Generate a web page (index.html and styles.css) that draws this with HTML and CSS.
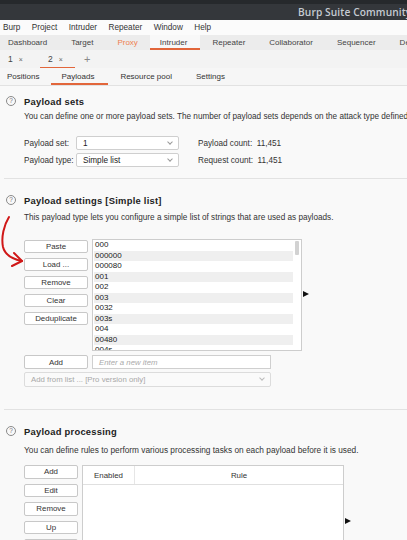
FILE: index.html
```html
<!DOCTYPE html>
<html>
<head>
<meta charset="utf-8">
<link rel="stylesheet" href="styles.css">
</head>
<body>
<div class="app">
  <div class="titlebar">
    <div class="titlestrip"></div>
    <div class="titlemain"><span class="apptitle">Burp Suite Community Edition</span></div>
  </div>
  <div class="menubar">
    <span class="menu m-burp">Burp</span>
    <span class="menu">Project</span>
    <span class="menu">Intruder</span>
    <span class="menu">Repeater</span>
    <span class="menu">Window</span>
    <span class="menu">Help</span>
  </div>
  <div class="tabs">
    <span class="tab first">Dashboard</span>
    <span class="tab">Target</span>
    <span class="tab proxy">Proxy</span>
    <span class="tab active">Intruder</span>
    <span class="tab">Repeater</span>
    <span class="tab">Collaborator</span>
    <span class="tab">Sequencer</span>
    <span class="tab">Decoder</span>
  </div>
  <div class="subtabs">
    <span class="stab">1<span class="x">×</span></span>
    <span class="stab active">2<span class="x">×</span></span>
    <span class="plus">+</span>
  </div>
  <div class="ptabs">
    <span class="ptab first">Positions</span>
    <span class="ptab active">Payloads</span>
    <span class="ptab">Resource pool</span>
    <span class="ptab">Settings</span>
  </div>

  <div class="content">
    <svg class="annot" width="30" height="60" viewBox="0 0 30 60">
      <path d="M9 2 C 4 10, 1 22, 3 32 C 5 40, 12 44, 22 46" fill="none" stroke="#d01818" stroke-width="2" stroke-linecap="round"/>
      <path d="M14 38 L22 46 L12 51" fill="none" stroke="#d01818" stroke-width="2" stroke-linecap="round" stroke-linejoin="round"/>
    </svg>

    <section class="sec sec1">
      <div class="head"><span class="help">?</span><span class="htitle">Payload sets</span></div>
      <p class="desc d1">You can define one or more payload sets. The number of payload sets depends on the attack type defined in the Positions tab.</p>
      <div class="form">
        <div class="frow">
          <span class="flabel">Payload set:</span>
          <div class="select"><span>1</span><span class="chev"></span></div>
          <span class="count">Payload count:&nbsp; 11,451</span>
        </div>
        <div class="frow">
          <span class="flabel">Payload type:</span>
          <div class="select"><span>Simple list</span><span class="chev"></span></div>
          <span class="count">Request count:&nbsp; 11,451</span>
        </div>
      </div>
    </section>
    <div class="sep s1"></div>

    <section class="sec sec2">
      <div class="head"><span class="help">?</span><span class="htitle">Payload settings [Simple list]</span></div>
      <p class="desc d2">This payload type lets you configure a simple list of strings that are used as payloads.</p>
      <div class="listarea">
        <div class="btns">
          <span class="btn">Paste</span>
          <span class="btn">Load ...</span>
          <span class="btn">Remove</span>
          <span class="btn">Clear</span>
          <span class="btn">Deduplicate</span>
        </div>
        <div class="listbox">
          <div class="rows">
            <div class="row">000</div>
            <div class="row">000000</div>
            <div class="row">000080</div>
            <div class="row">001</div>
            <div class="row">002</div>
            <div class="row">003</div>
            <div class="row">0032</div>
            <div class="row">003s</div>
            <div class="row">004</div>
            <div class="row">00480</div>
            <div class="row">004s</div>
          </div>
          <div class="scroll"><div class="thumb"></div></div>
        </div>
        <span class="tri t1"></span>
      </div>
      <div class="addrow">
        <span class="btn">Add</span>
        <div class="input">Enter a new item</div>
      </div>
      <div class="select wide disabled"><span>Add from list ... [Pro version only]</span><span class="chev"></span></div>
    </section>
    <div class="sep s2"></div>

    <section class="sec sec3">
      <div class="head"><span class="help">?</span><span class="htitle">Payload processing</span></div>
      <p class="desc d3">You can define rules to perform various processing tasks on each payload before it is used.</p>
      <div class="listarea la3">
        <div class="btns b3">
          <span class="btn">Add</span>
          <span class="btn">Edit</span>
          <span class="btn">Remove</span>
          <span class="btn">Up</span>
          <span class="btn">Down</span>
        </div>
        <div class="table">
          <div class="thead"><span class="th en">Enabled</span><span class="th rule">Rule</span></div>
        </div>
        <span class="tri t3"></span>
      </div>
    </section>
  </div>
</div>
</body>
</html>
```

FILE: styles.css
```css
* { box-sizing: border-box; }
html, body { margin: 0; padding: 0; }
body {
  width: 407px;
  height: 540px;
  overflow: hidden;
  background: #f9f9f9;
  font-family: "Liberation Sans", Arial, sans-serif;
  color: #2a2a2a;
  white-space: nowrap;
}
.app { width: 407px; height: 540px; overflow: hidden; position: relative; }

.titlebar { height: 20px; background: #34373b; }
.titlestrip { height: 4px; background: #26292c; }
.titlemain { height: 16px; padding-left: 298px; display: flex; align-items: center; overflow: hidden; }
.apptitle { font-family: "Open Sans", sans-serif; font-weight: 600; font-size: 10.2px; color: #c5cbd2; letter-spacing: 0.1px; }

.menubar { height: 15px; background: #fbfbfb; display: flex; align-items: center; font-size: 8.2px; color: #333; padding-left: 3px; }
.menu { margin-right: 11.5px; }

.tabs { height: 15px; background: #ececec; display: flex; align-items: stretch; font-size: 8px; color: #444; }
.tab { padding: 0 12px; display: flex; align-items: center; }
.tab.first { padding-left: 8px; }
.tab.proxy { color: #ef8150; }
.tab.active { background: #f8f8f8; border-bottom: 2px solid #e2663b; padding: 2px 13px 0 10px; }

.subtabs { height: 18px; background: #f3f3f3; display: flex; align-items: stretch; font-size: 8.5px; color: #444; }
.stab { display: flex; align-items: center; padding: 0 8px 0 8px; width: 40px; }
.stab .x { font-size: 7px; color: #666; margin-left: 6px; }
.stab.active { width: 35px; border-bottom: 1.5px solid #e2663b; padding-top: 1px; }
.plus { display: flex; align-items: center; color: #888; font-size: 11px; margin-left: 9px; }

.ptabs { height: 18px; background: #f6f6f6; display: flex; align-items: stretch; font-size: 8px; color: #333; border-bottom: 1px solid #e2e2e2; }
.ptab { padding: 0 12px; display: flex; align-items: center; }
.ptab.first { padding-left: 7px; }
.ptab.active { border-bottom: 2px solid #e2663b; padding: 2px 14px 0 10px; }

.content { position: relative; }
.annot { position: absolute; left: 0; top: 129px; }

.sec { padding-left: 0; }
.head { display: flex; align-items: center; height: 14px; padding-left: 6px; }
.help { width: 10px; height: 10px; border: 1px solid #8a8a8a; border-radius: 50%; font-size: 6.5px; color: #777; display: flex; align-items: center; justify-content: center; line-height: 1; }
.htitle { margin-left: 8px; font-weight: bold; font-size: 9.4px; color: #222; letter-spacing: 0.25px; }
.desc { margin: 0; padding-left: 24px; font-size: 8.2px; line-height: 10px; color: #333; }
.d3 { font-size: 8.3px; }

.sec1 { padding-top: 8px; }
.d1 { margin-top: 4px; }
.form { margin-top: 14px; padding-left: 24px; display: flex; flex-direction: column; gap: 3px; }
.frow { display: flex; align-items: center; height: 14px; font-size: 8.2px; color: #333; }
.flabel { width: 52px; }
.select { width: 103px; height: 14px; background: #fff; border: 1px solid #cfcfcf; border-radius: 2px; display: flex; align-items: center; justify-content: space-between; padding: 0 5px 0 6px; font-size: 8.2px; color: #222; }
.chev { width: 4px; height: 4px; border-right: 1px solid #999; border-bottom: 1px solid #999; transform: rotate(45deg); margin-top: -3px; margin-right: 1px; }
.count { margin-left: 19px; }

.sep { height: 1px; background: #e2e2e2; margin-left: 4px; }
.s1 { margin-top: 11px; }
.s2 { margin-top: 22px; }

.sec2 { padding-top: 14px; }
.d2 { margin-top: 6px; }
.listarea { margin-top: 16px; padding-left: 24px; display: flex; align-items: flex-start; position: relative; }
.btns { width: 64px; display: flex; flex-direction: column; gap: 5px; padding-top: 1px; }
.btn { height: 13px; background: #fff; border: 1px solid #c8c8c8; border-radius: 2px; display: flex; align-items: center; justify-content: center; font-size: 7.9px; color: #333; }
.listbox { margin-left: 4px; width: 210px; height: 112px; background: #fff; border: 1px solid #cdcdcd; display: flex; overflow: hidden; }
.rows { flex: 1; padding: 0 0 0 1px; overflow: hidden; }
.row { height: 10.5px; line-height: 10.5px; font-size: 8px; padding-left: 1px; color: #222; }
.row:nth-child(even) { background: #efefef; }
.scroll { width: 8px; padding: 1px 2px; }
.thumb { width: 4px; height: 14px; background: #d2d2d2; border-radius: 1px; }
.tri { width: 0; height: 0; border-left: 6px solid #111; border-top: 3.5px solid transparent; border-bottom: 3.5px solid transparent; margin-left: 1px; }
.t1 { margin-top: 52px; }

.addrow { margin-top: 4px; padding-left: 24px; display: flex; align-items: center; gap: 4px; }
.addrow .btn { width: 64px; height: 14px; }
.input { width: 179px; height: 14px; background: #fff; border: 1px solid #cfcfcf; font-size: 7.8px; font-style: italic; color: #aaa; padding-left: 6px; display: flex; align-items: center; }
.select.wide { margin-top: 3px; margin-left: 24px; width: 247px; height: 15px; font-size: 7.8px; }
.select.disabled { background: #fafafa; border-color: #dcdcdc; color: #a8a8a8; }
.select.disabled .chev { border-color: #bbb; }

.sec3 { padding-top: 14px; }
.d3 { margin-top: 7px; }
.la3 { margin-top: 10px; }
.b3 { width: 54px; padding-top: 0; }
.b3 .btn { height: 13.5px; }
.table { margin-left: 4px; width: 262px; height: 100px; background: #fff; border: 1px solid #cdcdcd; }
.thead { display: flex; height: 19px; border-bottom: 1px solid #e0e0e0; font-size: 7.9px; color: #333; }
.th { display: flex; align-items: center; }
.th.en { width: 52px; padding-left: 11px; border-right: 1px solid #e6e6e6; }
.th.rule { flex: 1; justify-content: center; }
.t3 { margin-top: 53px; }
```
